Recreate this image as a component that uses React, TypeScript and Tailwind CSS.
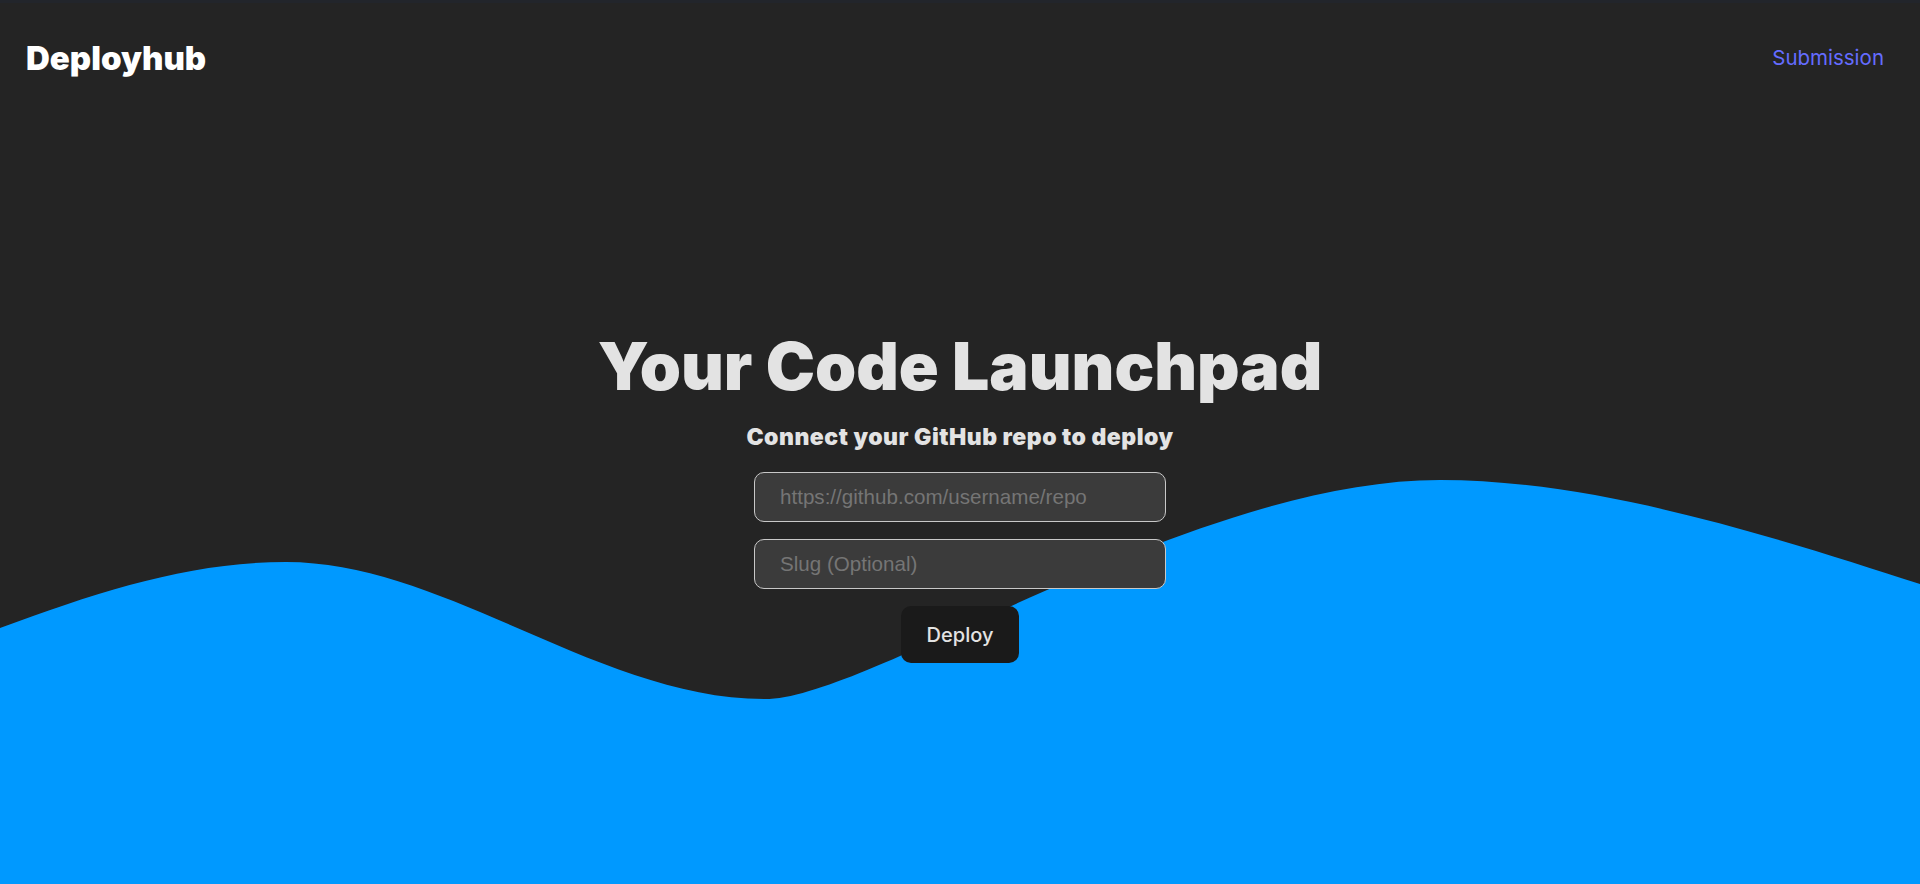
import React from 'react';

function Wave() {
  return (
    <svg
      className="absolute inset-0 w-full h-[881px]"
      viewBox="0 0 1920 881"
      preserveAspectRatio="none"
      aria-hidden="true"
    >
      <path
        fill="#0099ff"
        d="M0,625 C100,588 190,559 286,559 C445,559 600,696 765,696 C870,696 1190,477 1440,477 C1600,477 1780,536 1920,581 L1920,881 L0,881 Z"
      />
    </svg>
  );
}

export default function App() {
  const [repoUrl, setRepoUrl] = React.useState('');
  const [slug, setSlug] = React.useState('');

  return (
    <div className="relative h-[884px] w-full overflow-hidden bg-[#242424] border-t-[3px] border-[#22252b] font-['Inter',sans-serif]">
      <Wave />

      <nav className="relative z-10 flex h-[111px] items-center justify-between pl-[26px] pr-[36px]">
        <span className="text-[33px] font-black text-white">Deployhub</span>
        <a href="#" className="text-[20.5px] font-normal text-[#646cff]">
          Submission
        </a>
      </nav>

      <main className="relative z-10 flex flex-col items-center pt-[219px]">
        <h1 className="text-[66px] leading-none font-black text-[#e3e3e3]">
          Your Code Launchpad
        </h1>
        <p className="mt-[22px] text-[23px] leading-[33px] font-black tracking-[0.5px] text-[#e3e3e3]">
          Connect your GitHub repo to deploy
        </p>

        <div className="mt-[18px] flex flex-col gap-[17px]">
          <input
            value={repoUrl}
            onChange={(e) => setRepoUrl(e.target.value)}
            placeholder="https://github.com/username/repo"
            className="h-[50px] w-[412px] rounded-[10px] border border-[#c8c8c8] bg-[#3b3b3b] px-[25px] font-['Liberation_Sans',Arial,sans-serif] text-[20.6px] text-[#e3e3e3] placeholder:text-[#757575] outline-none"
          />
          <input
            value={slug}
            onChange={(e) => setSlug(e.target.value)}
            placeholder="Slug (Optional)"
            className="h-[50px] w-[412px] rounded-[10px] border border-[#c8c8c8] bg-[#3b3b3b] px-[25px] font-['Liberation_Sans',Arial,sans-serif] text-[20.6px] text-[#e3e3e3] placeholder:text-[#757575] outline-none"
          />
        </div>

        <button className="mt-[17px] h-[57px] rounded-[10px] border border-transparent bg-[#1a1a1a] px-[25px] text-[20px] font-medium text-[#e3e3e3]">
          Deploy
        </button>
      </main>
    </div>
  );
}
